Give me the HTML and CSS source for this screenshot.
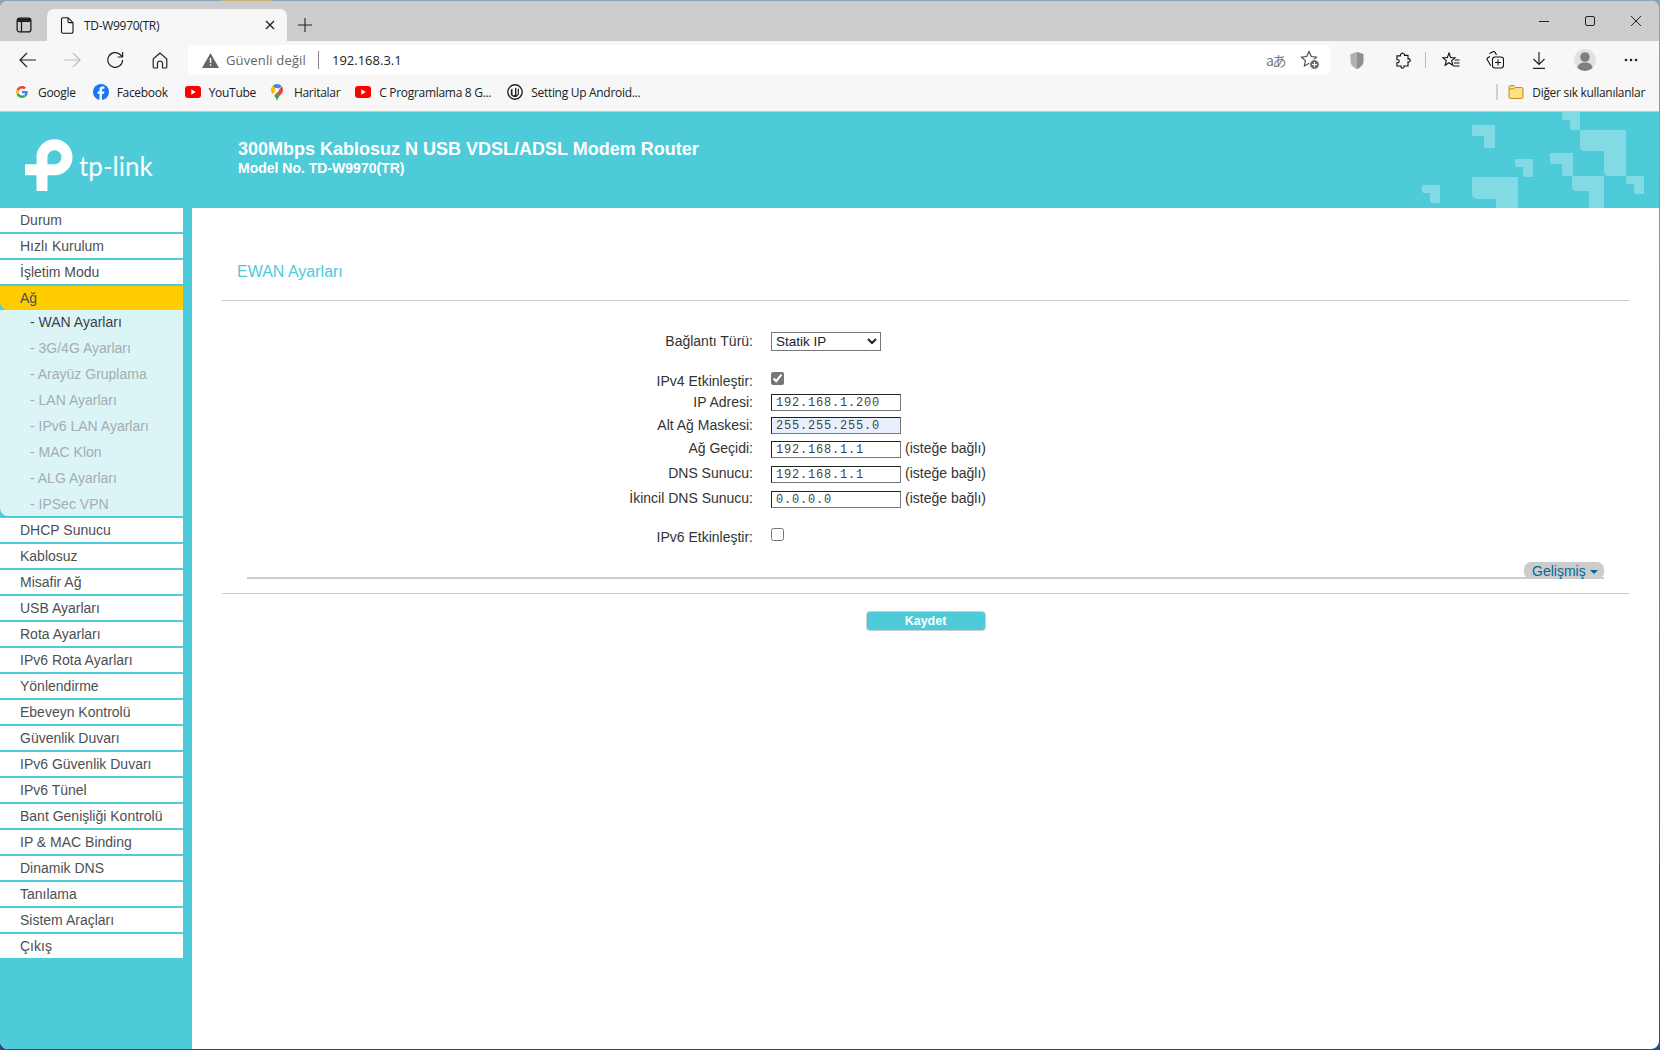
FILE: index.html
```html
<!DOCTYPE html>
<html lang="tr">
<head>
<meta charset="utf-8">
<title>TD-W9970(TR)</title>
<link rel="stylesheet" href="styles.css">
</head>
<body>
<div class="window">
  <div class="tabstrip">
    <div class="strip-toggle">
      <svg width="16" height="16" viewBox="0 0 16 16" fill="none" stroke="#111" stroke-width="1.2"><rect x="1.1" y="1.1" width="13.8" height="13.8" rx="2.5"/><path d="M1.5 4.4h13M5.5 4.4v10"/><path d="M1.5 2.8h13" stroke-width="2"/></svg>
    </div>
    <div class="tab">
      <svg class="tab-doc" width="14" height="17" viewBox="0 0 14 17" fill="none" stroke="#111" stroke-width="1.1"><path d="M1.5 2.2a1.5 1.5 0 0 1 1.5-1.5h5l5 5v9a1.5 1.5 0 0 1-1.5 1.5H3a1.5 1.5 0 0 1-1.5-1.5zM8 1v3.6a1 1 0 0 0 1 1h4"/></svg>
      <span class="tab-title">TD-W9970(TR)</span>
      <svg class="tab-close" width="10" height="10" viewBox="0 0 10 10" stroke="#222" stroke-width="1.4"><path d="M1 1l8 8M9 1l-8 8"/></svg>
    </div>
    <div class="tab-new">
      <svg width="14" height="14" viewBox="0 0 14 14" stroke="#222" stroke-width="1.1"><path d="M7 0v14M0 7h14"/></svg>
    </div>
    <div class="strip-space"></div>
    <div class="winbtn"><svg width="10" height="10" viewBox="0 0 10 10" stroke="#222"><path d="M0 5.5h10"/></svg></div>
    <div class="winbtn"><svg width="10" height="10" viewBox="0 0 10 10" fill="none" stroke="#222"><rect x=".5" y=".5" width="9" height="9" rx="1.5"/></svg></div>
    <div class="winbtn"><svg width="10" height="10" viewBox="0 0 10 10" stroke="#222"><path d="M0 0l10 10M10 0L0 10"/></svg></div>
  </div>

  <div class="toolbar">
    <div class="tool"><svg width="18" height="16" viewBox="0 0 18 16" fill="none" stroke="#222" stroke-width="1.2"><path d="M17 8H1M8 1L1 8l7 7"/></svg></div>
    <div class="tool"><svg width="18" height="16" viewBox="0 0 18 16" fill="none" stroke="#bdbdbd" stroke-width="1.2"><path d="M1 8h16M10 1l7 7-7 7"/></svg></div>
    <div class="tool"><svg width="18" height="18" viewBox="0 0 18 18" fill="none" stroke="#222" stroke-width="1.2"><path d="M15.6 9a7.4 7.4 0 1 1-2.4-5.500L15.400 6M15.600 1v5h-5"/></svg></div>
    <div class="tool"><svg width="16" height="17" viewBox="0 0 16 17" fill="none" stroke="#222" stroke-width="1.2"><path d="M8 1L1.200 7v8a1 1 0 0 0 1 1H5.500v-4.500a2.500 2.500 0 0 1 5 0V16h3.300a1 1 0 0 0 1-1V7z"/></svg></div>
    <div class="addr">
      <svg class="addr-warn" width="17" height="15" viewBox="0 0 17 15"><path d="M8.500 0L17 15H0z" fill="#666"/><path d="M8.500 5v5M8.500 11.200v1.600" stroke="#fff" stroke-width="1.400"/></svg>
      <span class="addr-warn-text">Güvenli değil</span>
      <span class="addr-sep"></span>
      <span class="addr-url">192.168.3.1</span>
      <span class="addr-space"></span>
      <span class="addr-trans">aあ</span>
      <svg class="addr-star" width="20" height="20" viewBox="0 0 20 20"><path d="M9 1.500l2.300 5 5.200.6-3.900 3.600 1 5.200L9 13.300l-4.600 2.600 1-5.200L1.500 7.100l5.200-.6z" fill="none" stroke="#444" stroke-width="1.100"/><circle cx="14.500" cy="14.500" r="4.800" fill="#666" stroke="#fff"/><path d="M14.500 12v5M12 14.500h5" stroke="#fff" stroke-width="1.200"/></svg>
    </div>
    <div class="tools-right">
      <div class="tool"><svg width="14" height="17" viewBox="0 0 14 17"><path d="M7 0l6.500 2v7c0 4-3 6.500-6.500 8z" fill="#8f8f8f"/><path d="M7 0L.5 2v7c0 4 3 6.500 6.500 8z" fill="#b0b0b0"/></svg></div>
      <div class="tool tool-ext"><svg width="17" height="17" viewBox="0 0 20 20" fill="none" stroke="#111" stroke-width="1.300"><path d="M9 1.800c1.500-1.200 3.800 0 3.300 2.200h4.200v4.200c2-.6 3.400 1.600 2 3-.6.600-1.200.7-2 .5v4.800h-4.700c.4 2-1.600 3.200-3 2-.7-.6-.9-1.300-.6-2H3.500v-4c1.500.3 2.500-.4 2.700-1.500S5.500 8.800 3.500 9V4.500h4c-.2-1 .3-2 1.500-2.700z"/></svg></div>
      <span class="tool-sep"></span>
      <div class="tool"><svg width="18" height="17" viewBox="0 0 18 17" fill="none" stroke="#111" stroke-width="1.100"><path d="M7 1l1.700 4.600 4.300.2-3.300 2.900 1.100 4.600L7 10.700l-3.800 2.600 1.100-4.600L1 5.800l4.300-.2z"/><path d="M12.500 8h5M12 11h5.500M11.500 14h6"/></svg></div>
      <div class="tool"><svg width="18" height="18" viewBox="0 0 18 18" fill="none" stroke="#111" stroke-width="1.100"><path d="M4 5.500L1.800 6.800a1.500 1.500 0 0 0-.5 2l3.500 6M3.500 2.500l3.500-1.800a1.500 1.500 0 0 1 2 .6L10.500 4"/><rect x="6.500" y="6" width="11" height="11" rx="2.500"/><path d="M12 8.500v6M9 11.500h6"/></svg></div>
      <div class="tool"><svg width="14" height="17" viewBox="0 0 14 17" fill="none" stroke="#222" stroke-width="1.200"><path d="M7 0v12M1.500 7L7 12.500 12.500 7M1 16.400h12"/></svg></div>
      <div class="tool tool-avatar"><svg width="22" height="22" viewBox="0 0 22 22"><circle cx="11" cy="11" r="11" fill="#e3e1de"/><circle cx="11" cy="8" r="4.800" fill="#807f7d"/><path d="M3.500 19c.5-4 3.500-5.500 7.500-5.500s7 1.500 7.500 5.500A11 11 0 0 1 3.500 19z" fill="#807f7d"/></svg></div>
      <div class="tool tool-more"><svg width="14" height="4" viewBox="0 0 14 4" fill="#222"><circle cx="2" cy="2" r="1.300"/><circle cx="7" cy="2" r="1.300"/><circle cx="12" cy="2" r="1.300"/></svg></div>
    </div>
  </div>

  <div class="bookmarks">
    <a class="bm bm-google">
      <svg width="12" height="12" viewBox="0 0 24 24"><path d="M23.500 12.300c0-.9-.1-1.600-.2-2.300H12v4.500h6.500c-.3 1.500-1.100 2.800-2.400 3.600l3.800 2.900c2.200-2.100 3.600-5.100 3.600-8.700z" fill="#4285f4"/><path d="M12 24c3.200 0 6-1.100 7.900-2.900L16.100 18c-1 .7-2.400 1.200-4.100 1.200-3.100 0-5.800-2.100-6.700-5L1.400 17.200C3.400 21.200 7.400 24 12 24z" fill="#34a853"/><path d="M5.300 14.200c-.5-1.500-.5-3 0-4.500L1.400 6.800c-1.700 3.300-1.700 7.200 0 10.400z" fill="#fbbc05"/><path d="M12 4.800c1.800 0 3.300.6 4.600 1.800l3.400-3.400C17.900 1.200 15.200 0 12 0 7.400 0 3.400 2.800 1.400 6.800l3.900 3c.9-2.900 3.600-5 6.700-5z" fill="#ea4335"/></svg>
      <span>Google</span>
    </a>
    <a class="bm bm-fb">
      <svg width="16" height="16" viewBox="0 0 16 16"><circle cx="8" cy="8" r="8" fill="#1877f2"/><path d="M9 16V9.800h2l.4-2.400H9V6c0-.7.300-1.200 1.300-1.200h1.100V2.700c-.5-.1-1.100-.2-1.800-.2-1.900 0-3.100 1.100-3.100 3.200v1.700H4.500v2.400h2V16z" fill="#fff"/></svg>
      <span>Facebook</span>
    </a>
    <a class="bm bm-yt">
      <svg width="16" height="12" viewBox="0 0 16 12"><rect width="16" height="12" rx="3" fill="#f00"/><path d="M6.300 3.300v5.400L10.800 6z" fill="#fff"/></svg>
      <span>YouTube</span>
    </a>
    <a class="bm bm-maps">
      <svg width="12" height="17" viewBox="0 0 12 17"><path d="M6 17c-.6-2.400-1.500-3.700-2.800-5.300L6 8.500l2.800 3.200C7.500 13.300 6.600 14.600 6 17z" fill="#34a853"/><path d="M1 9.200A6 6 0 0 1 1.700 1.800L6 5.500 3.300 8.700 1.700 10.300z" fill="#fbbc05"/><path d="M1.700 1.800A6 6 0 0 1 6 0c1.800 0 3.400.8 4.500 2L7.800 4.500 6 5.500z" fill="#4285f4"/><path d="M10.500 2A6 6 0 0 1 12 6c0 2-1.300 4-3.200 5.700L6 8.500l1.700-2z" fill="#ea4335"/><circle cx="6" cy="6" r="2.100" fill="#fff"/></svg>
      <span>Haritalar</span>
    </a>
    <a class="bm bm-yt2">
      <svg width="16" height="12" viewBox="0 0 16 12"><rect width="16" height="12" rx="3" fill="#f00"/><path d="M6.300 3.300v5.400L10.800 6z" fill="#fff"/></svg>
      <span>C Programlama 8 G...</span>
    </a>
    <a class="bm bm-ue">
      <svg width="16" height="16" viewBox="0 0 16 16"><circle cx="8" cy="8" r="7.200" fill="#fff" stroke="#222" stroke-width="1.400"/><path d="M4 5.500l1.500-1v6l1.200 1 1.300-1V4.200l1.400-.7v7.700l1.300-1V5l1.200-.5v6L9.500 13H6.500L3.800 11V6z" fill="#222"/></svg>
      <span>Setting Up Android...</span>
    </a>
    <span class="bm-space"></span>
    <span class="bm-sep"></span>
    <a class="bm bm-other">
      <svg width="16" height="14" viewBox="0 0 16 14"><path d="M1 2a1.500 1.500 0 0 1 1.500-1.500H6L7.500 2.500h6A1.500 1.500 0 0 1 15 4v8a1.500 1.500 0 0 1-1.500 1.500h-11A1.500 1.500 0 0 1 1 12z" fill="#ffdf85" stroke="#c08a16"/><path d="M1.500 3.800h5" stroke="#c08a16"/></svg>
      <span>Diğer sık kullanılanlar</span>
    </a>
  </div>

  <header class="hero">
    <div class="brand">
      <svg class="brand-mark" width="48" height="52" viewBox="0 0 48 52" fill="none" stroke="#fff" stroke-width="11"><path d="M17 52V18.300A12.500 12.500 0 1 1 29.500 30.800H0"/></svg>
      <span class="brand-name">tp-link</span>
    </div>
    <div class="hero-text">
      <div class="hero-title">300Mbps Kablosuz N USB VDSL/ADSL Modem Router</div>
      <div class="hero-model">Model No. TD-W9970(TR)</div>
    </div>
    <svg class="hero-deco" width="240" height="96" viewBox="1420 112 240 96" fill="#81dae4">
      <path d="M1562 112H1580V130H1572Q1570 130 1570 128V120H1564Q1562 120 1562 118Z"/>
      <path d="M1472 125H1495V148H1486Q1484 148 1484 146V136H1474Q1472 136 1472 134Z"/>
      <path d="M1580 130H1626V176H1608Q1604 176 1604 172V151H1584Q1580 151 1580 147Z"/>
      <path d="M1550 153H1573V176H1564Q1562 176 1562 174V164H1552Q1550 164 1550 162Z"/>
      <path d="M1515 159H1533V177H1525Q1523 177 1523 175V167H1517Q1515 167 1515 165Z"/>
      <path d="M1572 176H1604V208H1589V191H1576Q1572 191 1572 187Z"/>
      <path d="M1626 176H1644V194H1636Q1634 194 1634 192V184H1628Q1626 184 1626 182Z"/>
      <path d="M1422 185H1440V203H1432Q1430 203 1430 201V193H1424Q1422 193 1422 191Z"/>
      <path d="M1472 177H1518V208H1496V199H1478Q1472 199 1472 193Z"/>
    </svg>
  </header>

  <div class="page">
    <nav class="side">
      <a class="item">Durum</a>
      <a class="item">Hızlı Kurulum</a>
      <a class="item">İşletim Modu</a>
      <a class="item item-active">Ağ</a>
      <div class="sub">
        <a class="sub-item sub-current">- WAN Ayarları</a>
        <a class="sub-item">- 3G/4G Ayarları</a>
        <a class="sub-item">- Arayüz Gruplama</a>
        <a class="sub-item">- LAN Ayarları</a>
        <a class="sub-item">- IPv6 LAN Ayarları</a>
        <a class="sub-item">- MAC Klon</a>
        <a class="sub-item">- ALG Ayarları</a>
        <a class="sub-item">- IPSec VPN</a>
      </div>
      <a class="item">DHCP Sunucu</a>
      <a class="item">Kablosuz</a>
      <a class="item">Misafir Ağ</a>
      <a class="item">USB Ayarları</a>
      <a class="item">Rota Ayarları</a>
      <a class="item">IPv6 Rota Ayarları</a>
      <a class="item">Yönlendirme</a>
      <a class="item">Ebeveyn Kontrolü</a>
      <a class="item">Güvenlik Duvarı</a>
      <a class="item">IPv6 Güvenlik Duvarı</a>
      <a class="item">IPv6 Tünel</a>
      <a class="item">Bant Genişliği Kontrolü</a>
      <a class="item">IP &amp; MAC Binding</a>
      <a class="item">Dinamik DNS</a>
      <a class="item">Tanılama</a>
      <a class="item">Sistem Araçları</a>
      <a class="item">Çıkış</a>
    </nav>
    <main class="content">
      <div class="section-head"><h1 class="section-title">EWAN Ayarları</h1></div>
      <form class="form">
        <div class="row row-type">
          <label class="label">Bağlantı Türü:</label>
          <select class="select"><option>Statik IP</option></select>
        </div>
        <div class="row row-check row-v4">
          <label class="label">IPv4 Etkinleştir:</label>
          <input class="check" type="checkbox" checked>
        </div>
        <div class="row row-ip">
          <label class="label">IP Adresi:</label>
          <input class="field" type="text" value="192.168.1.200">
        </div>
        <div class="row row-mask">
          <label class="label">Alt Ağ Maskesi:</label>
          <input class="field field-fill" type="text" value="255.255.255.0">
        </div>
        <div class="row row-opt">
          <label class="label">Ağ Geçidi:</label>
          <input class="field" type="text" value="192.168.1.1">
          <span class="opt">(isteğe bağlı)</span>
        </div>
        <div class="row row-opt">
          <label class="label">DNS Sunucu:</label>
          <input class="field" type="text" value="192.168.1.1">
          <span class="opt">(isteğe bağlı)</span>
        </div>
        <div class="row row-opt">
          <label class="label">İkincil DNS Sunucu:</label>
          <input class="field" type="text" value="0.0.0.0">
          <span class="opt">(isteğe bağlı)</span>
        </div>
        <div class="row row-check row-v6">
          <label class="label">IPv6 Etkinleştir:</label>
          <input class="check" type="checkbox">
        </div>
        <div class="advanced">
          <span class="adv-pill">Gelişmiş <i class="caret"></i></span>
        </div>
        <div class="rule"></div>
        <div class="actions"><button class="save" type="button">Kaydet</button></div>
      </form>
    </main>
  </div>
</div>
</body>
</html>
```
FILE: styles.css
```css
* { box-sizing: border-box; }
html, body { margin: 0; height: 1050px; overflow: hidden; }
body {
  padding-top: 1px;
  background:
    linear-gradient(#c9b37a, #c9b37a) 222px 0 / 50px 1px no-repeat,
    linear-gradient(#8aa4ba, #6d8196 50%, #1d4f8f);
  font-family: "Liberation Sans", Arial, sans-serif;
}
a { color: inherit; text-decoration: none; }
svg { display: block; flex: none; }

.window {
  width: 1659px;
  height: 1048px;
  border-radius: 8px;
  overflow: hidden;
  display: flex;
  flex-direction: column;
  background: #fff;
}

/* Browser chrome */
.tabstrip { height: 40px; display: flex; background: #cccccc; flex: none; }
.strip-toggle { width: 47px; display: flex; align-items: center; justify-content: center; padding-top: 8px; }
.tab {
  width: 240px;
  margin-top: 8px;
  background: #f7f7f7;
  border-radius: 7px 7px 0 0;
  display: flex;
  align-items: center;
  padding: 0 12px 0 13px;
  font: 12px "Open Sans", sans-serif;
  color: #222;
}
.tab-title { margin-left: 10px; flex: 1; letter-spacing: -0.3px; }
.tab-new { width: 35px; display: flex; align-items: center; justify-content: center; padding-top: 8px; }
.strip-space { flex: 1; }
.winbtn { width: 46px; display: flex; align-items: center; justify-content: center; }

.toolbar { height: 38px; background: #f7f7f7; display: flex; align-items: center; padding: 0 6px; flex: none; }
.tool { width: 44px; height: 30px; display: flex; align-items: center; justify-content: center; }
.addr {
  flex: 1;
  height: 30px;
  margin-left: 6px;
  background: #fff;
  border-radius: 5px;
  display: flex;
  align-items: center;
  padding: 0 10px 0 14px;
  font: 13px "Open Sans", sans-serif;
}
.addr-warn-text { margin-left: 7px; color: #666; letter-spacing: 0.15px; }
.addr-sep { width: 1px; height: 18px; background: #888; margin: 0 13px 0 12px; }
.addr-url { color: #222; }
.addr-space { flex: 1; }
.addr-trans { color: #777; font: 14px "Noto Sans CJK JP", "Noto Sans", sans-serif; margin-right: 15px; letter-spacing: -1.5px; }
.tools-right { display: flex; align-items: center; margin-left: 5px; }
.tool-ext { margin-left: 1px; }
.tool-sep { width: 1px; height: 16px; background: #bbb; margin: 0 3px 0 1px; }
.tool-avatar, .tool-more { margin-left: 2px; }

.bookmarks {
  height: 33px;
  padding: 0 14px 6px 16px;
  background: #f7f7f7;
  border-bottom: 1px solid #c8c8c8;
  display: flex;
  align-items: center;
  font: 12px "Open Sans", sans-serif;
  color: #222;
  flex: none;
}
.bm { display: flex; align-items: center; gap: 8px; letter-spacing: -0.3px; }
.bm-google { gap: 10px; }
.bm-fb { margin-left: 17px; }
.bm-yt { margin-left: 17px; }
.bm-maps { margin-left: 15px; gap: 11px; }
.bm-yt2 { margin-left: 15px; }
.bm-ue { margin-left: 16px; }
.bm-space { flex: 1; }
.bm-sep { width: 2px; height: 16px; background: #d0d0d0; margin-right: 10px; }

/* Router header */
.hero {
  position: relative;
  height: 96px;
  flex: none;
  background: #4dcbd9;
  display: flex;
  align-items: center;
  color: #fff;
}
.brand { width: 238px; padding-left: 25px; display: flex; align-items: center; }
.brand-mark { margin-top: 9px; }
.brand-name { font: 400 26px Lato, sans-serif; margin-left: 6px; padding-top: 11px; }
.hero-text { padding-bottom: 5px; font-weight: 700; }
.hero-title { font-size: 18px; line-height: 20px; }
.hero-model { font-size: 14px; line-height: 16px; margin-top: 1px; }
.hero-deco { position: absolute; left: 1420px; top: 0; }

/* Layout */
.page { flex: 1; display: flex; min-height: 0; }
.side { width: 192px; background: #4dcbd9; padding-right: 9px; flex: none; font-size: 14px; color: #4d4f53; }
.item { display: block; height: 24px; line-height: 24px; padding-left: 20px; background: #fff; margin-bottom: 2px; }
.item-active { background: #ffcc00; margin-bottom: 0; border-bottom-left-radius: 8px; }
.sub { background: #dbf5f7; height: 206px; margin-bottom: 2px; border-bottom-left-radius: 8px; }
.sub-item { display: block; height: 26px; line-height: 25px; padding-left: 30px; color: #a3adb1; }
.sub-current { color: #3c4246; }

.content { flex: 1; min-width: 0; color: #333; font-size: 14px; }
.section-head { height: 93px; margin: 0 30px; border-bottom: 1px solid #cccccc; padding: 53px 0 0 15px; }
.section-title { margin: 0; font-size: 16px; line-height: 22px; font-weight: 400; color: #4dcbd9; }

.form { display: block; }
.row { display: grid; grid-template-columns: 561px auto auto; justify-content: start; column-gap: 18px; align-items: center; }
.label { text-align: right; line-height: 18px; }
.row-type { margin-top: 31px; height: 19px; }
.row-type .label { margin-top: -2px; }
.row-check { align-items: start; height: 20px; }
.row-v4 { margin-top: 21px; }
.row-v6 { margin-top: 20px; }
.row-ip { margin-top: 1px; height: 17px; }
.row-mask { margin-top: 6px; height: 17px; }
.row-opt { margin-top: 8px; height: 17px; column-gap: 0; grid-template-columns: 579px auto auto; }
.row-opt .label { padding-right: 18px; margin-top: -3px; }
.opt { margin-left: 4px; margin-top: -3px; }
.select {
  width: 110px;
  height: 19px;
  padding: 0;
  font: 13.5px "Liberation Sans", Arial, sans-serif;
  color: #222;
  background: #fff;
  border: 1px solid #767676;
  border-radius: 0;
}
.check { width: 13px; height: 13px; margin: 0; accent-color: #767676; }
.field {
  width: 130px;
  height: 17px;
  padding: 1px 4px 0;
  font: 12px "Liberation Mono", "Courier New", monospace;
  letter-spacing: 0.8px;
  color: #444;
  border-style: solid;
  border-width: 1px;
  border-color: #222 #767676 #767676 #222;
  background: #fff;
}
.field-fill { background: #e8f0fe; }

.advanced {
  margin: 14px 55px 0;
  height: 17px;
  border-bottom: 2px solid #cccccc;
  display: flex;
  justify-content: flex-end;
}
.adv-pill {
  width: 80px;
  height: 17px;
  background: #cccccc;
  border-radius: 7px;
  color: #00679c;
  font-size: 14px;
  line-height: 18px;
  padding-left: 8px;
  white-space: nowrap;
}
.caret { display: inline-block; margin-left: 0; border: 4px solid transparent; border-top-color: #00679c; border-bottom: 0; vertical-align: 2px; }
.rule { height: 1px; margin: 14px 30px 0; background: #cccccc; }
.actions { display: flex; justify-content: center; margin-top: 17px; }
.save {
  width: 120px;
  height: 20px;
  padding: 0;
  border: 1px solid #cfcfcf;
  border-radius: 4px;
  background: #4dcbd9;
  color: #fff;
  font: 700 12.5px "Liberation Sans", Arial, sans-serif;
}
```
